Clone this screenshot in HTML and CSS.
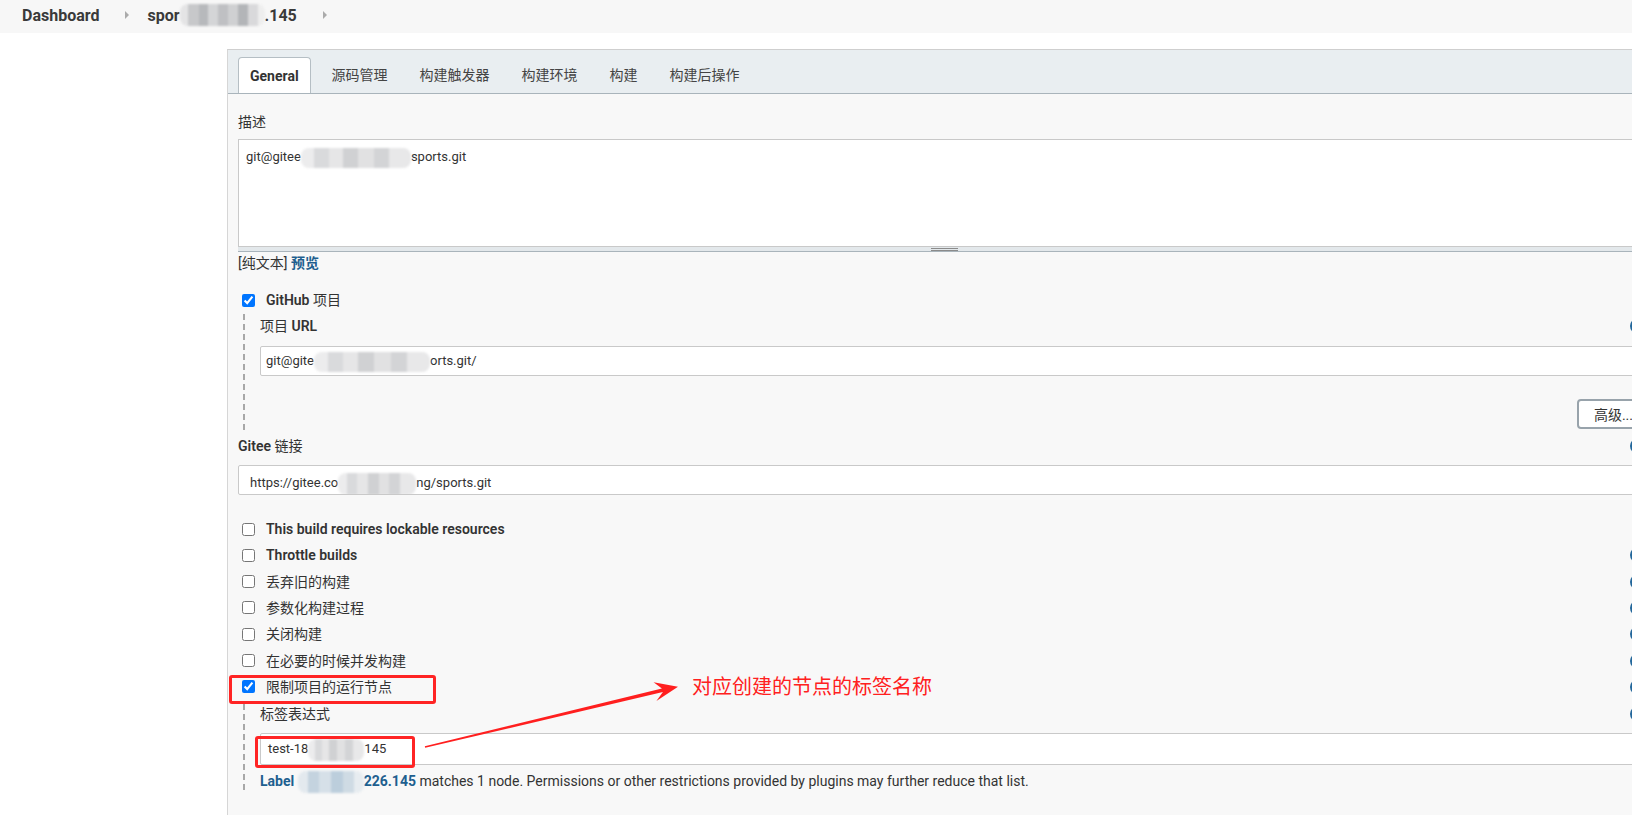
FILE: index.html
```html
<!DOCTYPE html>
<html lang="zh-CN">
<head>
<meta charset="utf-8">
<title>sports - 配置</title>
<link rel="stylesheet" href="styles.css">
</head>
<body>
<div class="page">
  <nav class="breadcrumbs">
    <a class="crumb" href="#">Dashboard</a>
    <span class="sep"></span>
    <a class="crumb" href="#">spor<span class="mosaic m-crumb"></span>.145</a>
    <span class="sep"></span>
  </nav>
  <div class="main">
    <aside class="side"></aside>
    <section class="panel">
      <div class="tabbar">
        <div class="tab active">General</div>
        <div class="tab">源码管理</div>
        <div class="tab">构建触发器</div>
        <div class="tab">构建环境</div>
        <div class="tab">构建</div>
        <div class="tab">构建后操作</div>
      </div>
      <div class="panel-body">
        <div class="field-label">描述</div>
        <div class="textarea">git@gitee<span class="mosaic m-desc"></span>sports.git</div>
        <div class="resize-bar"><span class="grip"></span></div>
        <div class="preview-line">[纯文本] <a class="link" href="#">预览</a></div>

        <div class="check-row github-row">
          <input type="checkbox" checked>
          <label><b class="lat">GitHub</b> 项目</label>
        </div>
        <div class="nested nested-github">
          <div class="row-label"><span>项目 <b class="lat">URL</b></span><span class="help"></span></div>
          <div class="input input-url">git@gite<span class="mosaic m-url"></span>orts.git/</div>
          <div class="btn-row"><button class="btn">高级...</button></div>
        </div>

        <div class="row-label gitee-label"><span><b class="lat">Gitee</b> 链接</span><span class="help"></span></div>
        <div class="input input-gitee">https://gitee.co<span class="mosaic m-gitee"></span>ng/sports.git</div>

        <div class="checklist">
          <div class="check-row"><input type="checkbox"><label><b class="lat">This build requires lockable resources</b></label></div>
          <div class="check-row"><input type="checkbox"><label><b class="lat">Throttle builds</b></label><span class="help"></span></div>
          <div class="check-row"><input type="checkbox"><label>丢弃旧的构建</label><span class="help"></span></div>
          <div class="check-row"><input type="checkbox"><label>参数化构建过程</label><span class="help"></span></div>
          <div class="check-row"><input type="checkbox"><label>关闭构建</label><span class="help"></span></div>
          <div class="check-row"><input type="checkbox"><label>在必要的时候并发构建</label><span class="help"></span></div>
          <div class="check-row"><input type="checkbox" checked><label>限制项目的运行节点</label><span class="help"></span></div>
        </div>
        <div class="nested nested-label">
          <div class="row-label"><span>标签表达式</span><span class="help"></span></div>
          <div class="input input-label">test-18<span class="mosaic m-label"></span>145</div>
          <div class="help-text"><a class="link" href="#">Label <span class="mosaic m-ip"></span>226.145</a> matches 1 node. Permissions or other restrictions provided by plugins may further reduce that list.</div>
        </div>
        <div class="btn-row btn-row-last"><button class="btn"></button></div>
      </div>
    </section>
  </div>

  <div class="anno-box box-check"></div>
  <div class="anno-box box-input"></div>
  <svg class="anno-arrow" viewBox="400 660 300 110" width="300" height="110">
    <polygon points="424.8,746.2 661.9,688.5 653.6,682.3 678,686.8 656.4,700.9 662.9,692.1 425.2,747.8" fill="#ff1f1f"/>
  </svg>
  <div class="anno-text">对应创建的节点的标签名称</div>
</div>
</body>
</html>
```

FILE: styles.css
```css
* { box-sizing: border-box; }

html, body {
  margin: 0;
  padding: 0;
  overflow: hidden;
  background: #fff;
}

body {
  font-family: Roboto, "Noto Sans CJK SC", sans-serif;
  font-size: 14px;
  color: #333;
}

.page {
  position: relative;
  width: 1700px;
  height: 815px;
}

/* breadcrumbs */
.breadcrumbs {
  height: 33px;
  background: #f7f7f7;
  display: flex;
  align-items: center;
  padding: 0 0 3px 22px;
}

.crumb {
  display: flex;
  align-items: center;
  font-size: 16px;
  font-weight: 700;
  color: #3a3a3a;
  text-decoration: none;
}

.sep {
  width: 0;
  height: 0;
  border-left: 4px solid #ababab;
  border-top: 4px solid transparent;
  border-bottom: 4px solid transparent;
  margin: 0 18px 0 26px;
}

/* layout */
.main {
  display: flex;
  padding-top: 16px;
}

.side {
  flex: none;
  width: 227px;
}

.panel {
  flex: none;
  width: 1434px;
  background: #f8f8f8;
  border-left: 1px solid #d6d6d6;
  border-top: 1px solid #cfcfcf;
}

/* tabs */
.tabbar {
  display: flex;
  gap: 10px;
  padding: 7px 0 0 10px;
  background: #e9eef1;
  border-bottom: 1px solid #a9b4bb;
}

.tab {
  height: 36px;
  padding: 0 11px;
  line-height: 36px;
  color: #444;
}

.tab.active {
  background: #fff;
  border: 1px solid #b5bec4;
  border-bottom: none;
  border-radius: 4px 4px 0 0;
  font-weight: 700;
  color: #333;
}

/* body */
.panel-body {
  padding: 18px 11px 40px 10px;
}

.field-label {
  line-height: 20px;
}

.textarea {
  margin-top: 7px;
  height: 108px;
  background: #fff;
  border: 1px solid #c9c9c9;
  padding: 7px;
  font-size: 13px;
  line-height: 20px;
  white-space: nowrap;
}

.resize-bar {
  height: 5px;
  background: #e3e8eb;
  border-bottom: 1px solid #a9b4bb;
  display: flex;
  justify-content: center;
  align-items: center;
}

.grip {
  width: 27px;
  height: 3px;
  border-top: 1px solid #8b8b8b;
  border-bottom: 1px solid #8b8b8b;
}

.preview-line {
  margin-top: 1px;
  line-height: 20px;
}

.link {
  color: #1e5f8f;
  font-weight: 700;
  text-decoration: none;
}

.lat {
  font-weight: 600;
}

/* checkboxes */
.check-row {
  display: flex;
  align-items: center;
  height: 20px;
  line-height: 20px;
}

.check-row input {
  flex: none;
  width: 13px;
  height: 13px;
  margin: 0 0 0 4px;
}

.check-row label {
  margin-left: 11px;
}

.github-row {
  margin-top: 17px;
}

.checklist {
  margin-top: 24px;
  display: flex;
  flex-direction: column;
  gap: 6.33px;
}

/* help icon (sits at row end) */
.help {
  flex: none;
  width: 16px;
  height: 16px;
  margin-left: auto;
  margin-right: 4px;
  border-radius: 50%;
  background: #23679b;
}

.row-label {
  display: flex;
  align-items: center;
  line-height: 20px;
}

/* nested (dashed) blocks */
.nested {
  margin-left: 5px;
  padding-left: 17px;
  background: repeating-linear-gradient(to bottom, #a8a8a8 0 6px, transparent 6px 10px) 0 0 / 2px 100% no-repeat;
}

.nested-github {
  margin-top: 4px;
  padding-top: 2px;
  padding-bottom: 1px;
}

.nested-label {
  margin-top: 7px;
}

/* inputs */
.input {
  height: 30px;
  background: #fff;
  border: 1px solid #c9c9c9;
  border-radius: 2px;
  font-size: 13px;
  line-height: 28px;
  white-space: nowrap;
  overflow: hidden;
}

.input-url {
  margin-top: 10px;
  padding-left: 5px;
}

.gitee-label {
  margin-top: 6px;
}

.input-gitee {
  margin-top: 9px;
  padding: 6px 0 0 11px;
  line-height: 22px;
}

.input-label {
  margin-top: 9px;
  height: 32px;
  line-height: 30px;
  padding-left: 7px;
}

.help-text {
  margin-top: 6px;
  line-height: 20px;
  font-size: 14px;
}

/* buttons */
.btn-row {
  display: flex;
  justify-content: flex-end;
  margin-top: 23px;
}

.btn-row-last {
  margin-top: 22px;
}

.btn {
  height: 30px;
  min-width: 72px;
  padding: 0 15px;
  background: #fff;
  border: 2px solid #98a3ab;
  border-radius: 4px;
  font: inherit;
  color: #333;
}

/* mosaic (redacted text) */
.mosaic {
  display: inline-block;
  vertical-align: middle;
  height: 18px;
  border-radius: 8px;
  filter: blur(1px);
  background: linear-gradient(90deg,
    #ececed 0 12%, #d9dadc 12% 25%, #e6e6e7 25% 38%, #d0d1d3 38% 52%,
    #e1e1e2 52% 66%, #d3d4d6 66% 80%, #e8e8e9 80% 100%);
}

.m-crumb {
  width: 85px;
  height: 22px;
  background: linear-gradient(90deg,
    #e4e4e5 0 10%, #c7c8ca 10% 22%, #b7b9bc 22% 33%, #d4d5d7 33% 45%,
    #bfc0c3 45% 56%, #cfd0d2 56% 68%, #b3b5b8 68% 80%, #d9d9db 80% 92%, #eeeeee 92% 100%);
}

.m-desc { width: 110px; height: 20px; }
.m-url { width: 116px; height: 20px; }
.m-gitee { width: 78px; height: 22px; }
.m-label { width: 56px; height: 22px; }

.m-ip {
  width: 66px;
  height: 22px;
  background: linear-gradient(90deg,
    #e3e9ee 0 15%, #c4d3df 15% 32%, #d6e0e8 32% 50%, #bccedc 50% 68%, #cfdbe4 68% 85%, #e7ecf0 85% 100%);
}

/* annotations (drawn over the screenshot) */
.anno-box {
  position: absolute;
  border: 3px solid #ff2424;
  border-radius: 3px;
}

.box-check {
  left: 229px;
  top: 675px;
  width: 207px;
  height: 29px;
}

.box-input {
  left: 255px;
  top: 736px;
  width: 160px;
  height: 32px;
}

.anno-arrow {
  position: absolute;
  left: 400px;
  top: 660px;
}

.anno-text {
  position: absolute;
  left: 692px;
  top: 673px;
  font-size: 20px;
  line-height: 28px;
  color: #ff2020;
}
```
